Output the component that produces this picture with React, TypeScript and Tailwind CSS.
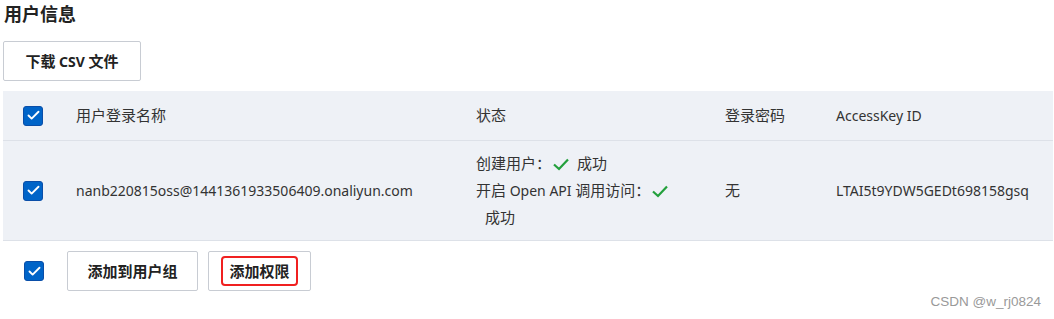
import { Check } from 'lucide-react';

function Box() {
  return (
    <span className="flex h-5 w-5 items-center justify-center rounded-[3px] border border-[#0a4ea8] bg-[#0064c8]">
      <Check size={15} strokeWidth={3} className="text-white" />
    </span>
  );
}

function Ok() {
  return (
    <svg width="18" height="14" viewBox="0 0 18 14" className="ml-[1px] mr-[7px] inline-block">
      <path d="M2 7.5 L7 12 L16 2.5" fill="none" stroke="#23a03c" strokeWidth="2.2" />
    </svg>
  );
}

// CJK glyphs in the shot render a touch wider than the latin text
function Zh({ children }: { children: React.ReactNode }) {
  return <span className="text-[15px]">{children}</span>;
}

export default function App() {
  return (
    <div
      className="h-[319px] w-[1054px] bg-white text-[14px] text-[#333]"
      style={{ fontFamily: '"Noto Sans", "Noto Sans CJK SC", sans-serif' }}
    >
      <h1 className="pl-[4px] pt-[2px] text-[18px] font-bold leading-[24px] text-[#222]">用户信息</h1>

      <div className="pl-[3px] pt-[15px]">
        <button className="h-[40px] w-[138px] rounded-[2px] border border-[#c8ccd3] bg-white text-[14px] font-bold text-[#222]">
          <Zh>下载</Zh> CSV <Zh>文件</Zh>
        </button>
      </div>

      <div className="ml-[3px] mt-[10px] w-[1050px] bg-[#eef1f6]">
        {/* header */}
        <div className="flex h-[50px] items-center border-b border-[#dde1e8]">
          <div className="w-[73px] pl-[20px]"><Box /></div>
          <div className="w-[400px]"><Zh>用户登录名称</Zh></div>
          <div className="w-[249px]"><Zh>状态</Zh></div>
          <div className="w-[111px]"><Zh>登录密码</Zh></div>
          <div>AccessKey ID</div>
        </div>
        {/* row */}
        <div className="flex h-[100px] items-center border-b border-[#dde1e8]">
          <div className="w-[73px] pl-[20px]"><Box /></div>
          <div className="w-[400px]">nanb220815oss@1441361933506409.onaliyun.com</div>
          <div className="w-[249px] leading-[27px]">
            <div className="flex items-center"><Zh>创建用户：</Zh><Ok /><Zh>成功</Zh></div>
            <div className="flex items-center"><Zh>开启</Zh>&nbsp;Open API&nbsp;<Zh>调用访问：</Zh><Ok /></div>
            <div className="pl-[9px]"><Zh>成功</Zh></div>
          </div>
          <div className="w-[111px]"><Zh>无</Zh></div>
          <div>LTAI5t9YDW5GEDt698158gsq</div>
        </div>
      </div>

      <div className="flex items-center pl-[24px] pt-[10px]">
        <Box />
        <button className="ml-[23px] h-[40px] w-[131px] rounded-[2px] border border-[#c8ccd3] bg-white text-[15px] font-bold text-[#222]">
          添加到用户组
        </button>
        <button className="ml-[10px] flex h-[40px] w-[103px] items-center justify-center rounded-[2px] border border-[#c8ccd3] bg-white text-[15px] font-bold text-[#222]">
          <span className="rounded-[4px] border-2 border-[#f02020] px-[6px] py-[2px]">添加权限</span>
        </button>
      </div>

      <div className="pr-[13px] pt-[1px] text-right text-[13.5px] text-[#999]" style={{ fontFamily: '"Liberation Sans", sans-serif' }}>
        CSDN @w_rj0824
      </div>
    </div>
  );
}
